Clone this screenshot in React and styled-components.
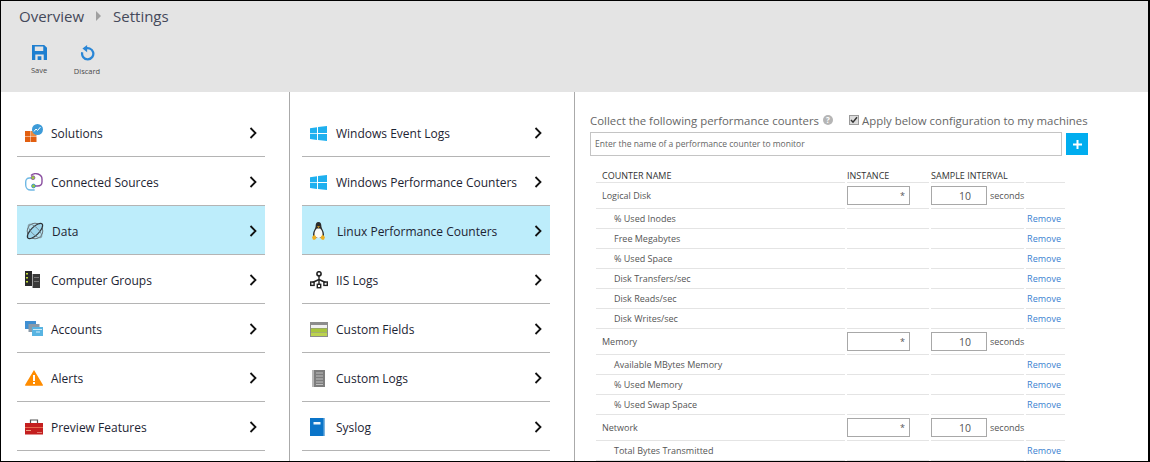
import React from "react";
import styled, { createGlobalStyle } from "styled-components";

const Global = createGlobalStyle`
  html, body { margin: 0; padding: 0; background: #fff; }
  * { box-sizing: border-box; }
`;

const Page = styled.div`
  width: 1150px;
  height: 462px;
  border: 1px solid #000;
  border-right-width: 2px;
  overflow: hidden;
  font-family: "Open Sans", "Noto Sans", sans-serif;
  color: #222;
  display: flex;
  flex-direction: column;
`;

const Header = styled.header`
  flex: none;
  height: 91px;
  background: #e4e4e4;
  padding: 5px 0 0 18px;
`;

const Crumbs = styled.nav`
  display: flex;
  align-items: center;
  height: 20px;
  font-size: 15px;
  color: #44495a;
`;

const CrumbArrow = styled.span`
  width: 0;
  height: 0;
  margin: 0 12px 0 12px;
  border-left: 5px solid #a0a0a0;
  border-top: 5px solid transparent;
  border-bottom: 5px solid transparent;
`;

const Toolbar = styled.div`
  display: flex;
  margin-top: 19px;
  margin-left: -2px;
`;

const ToolButton = styled.button`
  width: 44px;
  padding: 0;
  border: 0;
  background: none;
  display: flex;
  flex-direction: column;
  align-items: center;
  gap: 5px;
  font: 7.5px "Open Sans", sans-serif;
  color: #4a4a4a;
  & + & { margin-left: 4px; }
`;

const Columns = styled.main`
  flex: 1;
  display: flex;
  min-height: 0;
`;

const NavColumn = styled.section`
  flex: none;
  width: ${({ $width }) => $width}px;
  padding: 16px 0 0 ${({ $pad }) => $pad}px;
  border-right: 1px solid #aaa;
`;

const NavList = styled.ul`
  list-style: none;
  margin: 0;
  padding: 0;
  width: 248px;
`;

const NavItem = styled.li`
  height: 49px;
  display: flex;
  align-items: center;
  padding: 2px 8px 0 ${({ $active }) => ($active ? 9 : 8)}px;
  border-bottom: 1px solid #b4b4b4;
  background: ${({ $active }) => ($active ? "#bdedfb" : "transparent")};
  font-size: 12px;
  color: #1d2433;
`;

const IconSlot = styled.span`
  flex: none;
  width: 26px;
  height: 20px;
  display: flex;
  align-items: center;
`;

const Chevron = styled.svg`
  margin-left: auto;
`;

const Panel = styled.section`
  flex: 1;
  min-width: 0;
  padding: 19px 0 0 15px;
`;

const TopLine = styled.div`
  display: flex;
  align-items: center;
  height: 18px;
  font-size: 11.4px;
  color: #666;
`;

const HelpDot = styled.span`
  width: 10px;
  height: 10px;
  margin-left: 4px;
  border-radius: 50%;
  background: #b5b5b5;
  color: #fff;
  font-size: 8px;
  font-weight: 700;
  line-height: 10px;
  text-align: center;
`;

const CheckLabel = styled.label`
  display: flex;
  align-items: center;
  margin-left: 16px;
`;

const CheckBox = styled.span`
  width: 10px;
  height: 10px;
  margin-right: 3px;
  border: 1px solid #9a9a9a;
  background: #dcdcdc;
  display: flex;
  align-items: center;
  justify-content: center;
`;

const SearchRow = styled.div`
  display: flex;
  align-items: flex-start;
  margin-top: 3px;
`;

const SearchInput = styled.input`
  width: 472px;
  height: 24px;
  padding: 0 4px 2px;
  border: 1px solid #c4c4c4;
  font: 8.5px "Open Sans", sans-serif;
  color: #555;
  &::placeholder { color: #666; opacity: 1; }
`;

const AddButton = styled.button`
  width: 22px;
  height: 22px;
  margin: 1px 0 0 4px;
  padding: 0;
  border: 0;
  background: #00adef;
  display: flex;
  align-items: center;
  justify-content: center;
`;

const Table = styled.table`
  width: 473px;
  margin: 11px 0 0 4px;
  table-layout: fixed;
  border-collapse: separate;
  border-spacing: 2px 0;
  font-size: 9px;
  color: #555;
`;

const Th = styled.th`
  height: 16px;
  padding: 2px 0 0 ${({ $pad }) => $pad || 0}px;
  border-bottom: 1px solid #e4e4e4;
  font-weight: 400;
  text-align: left;
  color: #333;
  white-space: nowrap;
`;

const Td = styled.td`
  height: ${({ $group }) => ($group ? 26 : 20)}px;
  padding: 0 0 0 ${({ $pad }) => $pad || 0}px;
  border-bottom: 1px solid #e4e4e4;
  white-space: nowrap;
`;

const RemoveCell = styled(Td)`
  padding: 0 4px 0 0;
  text-align: right;
`;

const RemoveLink = styled.a`
  color: #3a7fd0;
`;

const ValueRow = styled.div`
  display: flex;
  align-items: center;
`;

const ValueBox = styled.input`
  width: ${({ $w }) => $w}px;
  height: 19px;
  padding: 0 ${({ $padRight }) => $padRight}px 0 0;
  border: 1px solid #a8a8a8;
  background: #fff;
  font: ${({ $size }) => $size}px "Open Sans", sans-serif;
  color: #555;
  text-align: right;
`;

const Unit = styled.span`
  margin-left: 3px;
`;

const SaveIcon = () => (
  <svg width="15" height="15" viewBox="0 0 16 16">
    <path fill="#1e7fd0" fillRule="evenodd" d="M0 0h13l3 3v13H0zM3 1.500v5h9v-5zM3.500 10v6h9v-6z" />
    <rect x="6" y="12" width="4" height="4" fill="#1e7fd0" />
  </svg>
);

const DiscardIcon = () => (
  <svg width="15" height="16" viewBox="0 0 16 17">
    <path d="M5 4.200a6 6 0 1 1-2.600 3.600" fill="none" stroke="#2a86d6" strokeWidth="2.400" />
    <path d="M7.600 0v7.600L2.600 3.800z" fill="#2a86d6" />
  </svg>
);

const SolutionsIcon = () => (
  <svg width="18" height="18" viewBox="0 0 18 18">
    <rect x="0" y="7" width="5.500" height="5" fill="#e25f10" />
    <rect x="0" y="12.500" width="5.500" height="5.500" fill="#e25f10" />
    <rect x="6" y="12.500" width="5.500" height="5.500" fill="#e25f10" />
    <rect x="6" y="7" width="5.500" height="5" fill="#ef8a3a" />
    <circle cx="12.500" cy="5.500" r="5.500" fill="#3d9bd8" />
    <path d="M9 7.500l2-2.500 1.500 1.500L15.500 3" fill="none" stroke="#fff" strokeWidth="1" />
  </svg>
);

const SourcesIcon = () => (
  <svg width="18" height="18" viewBox="0 0 18 18" fill="none">
    <path d="M6 2.500C7.500 .8 11 .5 13 1c2.500.8 4 2.500 4 5v3c0 2.500-2 4-4.500 4H10" stroke="#8a4fa0" strokeWidth="1.400" />
    <path d="M9 5H4.500C2 5 .7 6.800.7 9v3c0 3 2.300 5 5 5h4" stroke="#6fb8e4" strokeWidth="1.400" />
    <circle cx="8" cy="4.700" r="1.900" fill="#9ccc3c" stroke="#8a4fa0" strokeWidth="0.800" />
    <circle cx="8.500" cy="13" r="1.900" fill="#9ccc3c" stroke="#2a86d6" strokeWidth="0.800" />
  </svg>
);

const DataIcon = () => (
  <svg width="18" height="18" viewBox="0 0 18 18" fill="none">
    <circle cx="9" cy="9" r="7.800" fill="#b4e2f2" stroke="#6c777c" strokeWidth="1" />
    <ellipse cx="9" cy="9" rx="10" ry="4" transform="rotate(-45 9 9)" fill="#9ed6ec" stroke="#2f3438" strokeWidth="1.200" />
    <ellipse cx="9" cy="9" rx="9" ry="3.500" transform="rotate(45 9 9)" stroke="#6f7f86" strokeWidth="0.800" />
  </svg>
);

const GroupsIcon = () => (
  <svg width="15" height="18" viewBox="0 0 15 18">
    <rect x="0" y="0" width="7" height="15" fill="#2a2a2a" />
    <rect x="7" y="3" width="1" height="14" fill="#a8a8a8" />
    <rect x="8" y="3" width="7" height="14" fill="#3a3a3a" />
    <rect x="1" y="2" width="2" height="1.500" fill="#c4dc3c" />
    <rect x="1" y="6" width="2" height="1.500" fill="#c4dc3c" />
    <rect x="1" y="10" width="2" height="1.500" fill="#c4dc3c" />
    <rect x="9" y="6" width="5" height="1" fill="#777" />
    <rect x="9" y="10" width="5" height="1" fill="#777" />
  </svg>
);

const AccountsIcon = () => (
  <svg width="18" height="16" viewBox="0 0 18 16">
    <rect x="0" y="0" width="11" height="8" fill="#3f8fd2" />
    <rect x="3.500" y="3" width="11" height="8" fill="#8a9aa8" />
    <rect x="7" y="6" width="11" height="9" fill="#58b4e2" />
    <rect x="8" y="8" width="9" height="1" fill="#cdeaf7" />
    <rect x="11" y="10.500" width="4" height="1" fill="#cdeaf7" />
  </svg>
);

const AlertIcon = () => (
  <svg width="18" height="16" viewBox="0 0 18 16">
    <path d="M9 0l9 15a.6.6 0 0 1-.5.7H.5a.6.6 0 0 1-.5-.7z" fill="#ff8c00" />
    <rect x="8" y="5" width="2" height="6" fill="#fff" />
    <rect x="8" y="12" width="2" height="2" fill="#fff" />
  </svg>
);

const PreviewIcon = () => (
  <svg width="18" height="16" viewBox="0 0 18 16">
    <path d="M5.500 4V1h7v3" fill="none" stroke="#555" strokeWidth="1.200" />
    <rect x="0" y="4" width="18" height="11.500" fill="#c41f1f" />
    <rect x="0" y="8" width="18" height="1" fill="#e86a50" />
    <rect x="1" y="11" width="5" height="1" fill="#eda080" />
    <rect x="12" y="13" width="5" height="1" fill="#e07a70" />
  </svg>
);

const WindowsIcon = () => (
  <svg width="17" height="15" viewBox="0 0 17 15">
    <path fill="#1fb0ef" d="M0 2.200l7-1v6H0zM8 1l9-1v7H8zM0 8h7v6L0 13zM8 8h9v7l-9-1z" />
  </svg>
);

const PenguinIcon = () => (
  <svg width="15" height="18" viewBox="0 0 15 18">
    <path d="M7.500 0C5.300 0 4.600 2 4.600 4.500 4.600 6.500 2 9 2 12.500 2 14 3 15.500 4 16h7c1-.5 2-2 2-3.500C13 9 10.400 6.500 10.400 4.500 10.400 2 9.700 0 7.500 0z" fill="#2b2b2b" />
    <path d="M5.800 6.500C4 8.500 3.200 10.500 3.500 13c.3 1.500 1.500 3 4 3s3.700-1.500 4-3c.3-2.500-.5-4.500-2.300-6.500z" fill="#fbfbf6" />
    <path d="M6 4.300h3L7.500 6z" fill="#e9a820" />
    <path d="M1 15l2.700-2.500L5.500 16 4 17.800H2zM14 15l-2.700-2.500L9.500 16l1.500 1.800h2z" fill="#eeb020" />
  </svg>
);

const NetworkIcon = () => (
  <svg width="18" height="18" viewBox="0 0 18 18" fill="none">
    <circle cx="9" cy="2.800" r="2.100" stroke="#222" strokeWidth="1.600" />
    <path d="M9 5v8M9 8.500L2.500 11.500M9 8.500l6.500 3" stroke="#222" strokeWidth="1.400" />
    <rect x="0.700" y="11" width="3.400" height="3.400" stroke="#222" strokeWidth="1.400" />
    <rect x="7.300" y="13.300" width="3.400" height="3.400" stroke="#222" strokeWidth="1.400" />
    <rect x="13.900" y="11" width="3.400" height="3.400" stroke="#222" strokeWidth="1.400" />
  </svg>
);

const FieldsIcon = () => (
  <svg width="18" height="15" viewBox="0 0 18 15">
    <rect width="18" height="15" fill="#8c8c8c" />
    <rect x="1" y="3" width="16" height="3" fill="#f0f0f0" />
    <rect x="1" y="6.500" width="16" height="3.500" fill="#a8c63c" />
    <rect x="1" y="10.500" width="16" height="3.500" fill="#bcd34f" />
  </svg>
);

const LogsIcon = () => (
  <svg width="18" height="17" viewBox="0 0 18 17">
    <rect x="2" y="0" width="13" height="17" fill="#7d7d7d" />
    <rect x="2" y="0" width="2" height="17" fill="#b8b8b8" />
    <path d="M6 3h7M6 6h7M6 9h7M6 12h7M6 14.500h7" stroke="#d0d0d0" strokeWidth="0.800" />
  </svg>
);

const SyslogIcon = () => (
  <svg width="15" height="18" viewBox="0 0 15 18">
    <rect width="15" height="18" fill="#0a74c8" />
    <rect x="13.500" width="1.500" height="18" fill="#7fb5e0" />
    <rect x="3.500" y="4" width="7" height="2.500" fill="#eaf4fb" />
  </svg>
);

const ChevronIcon = () => (
  <Chevron width="8" height="12" viewBox="0 0 8 12">
    <path d="M1.500 1l5 5-5 5" fill="none" stroke="#111" strokeWidth="1.800" />
  </Chevron>
);

const primaryNav = [
  { label: "Solutions", icon: <SolutionsIcon /> },
  { label: "Connected Sources", icon: <SourcesIcon /> },
  { label: "Data", icon: <DataIcon />, active: true },
  { label: "Computer Groups", icon: <GroupsIcon /> },
  { label: "Accounts", icon: <AccountsIcon /> },
  { label: "Alerts", icon: <AlertIcon /> },
  { label: "Preview Features", icon: <PreviewIcon /> },
];

const dataNav = [
  { label: "Windows Event Logs", icon: <WindowsIcon /> },
  { label: "Windows Performance Counters", icon: <WindowsIcon /> },
  { label: "Linux Performance Counters", icon: <PenguinIcon />, active: true },
  { label: "IIS Logs", icon: <NetworkIcon /> },
  { label: "Custom Fields", icon: <FieldsIcon /> },
  { label: "Custom Logs", icon: <LogsIcon /> },
  { label: "Syslog", icon: <SyslogIcon /> },
];

const counterGroups = [
  {
    name: "Logical Disk",
    counters: ["% Used Inodes", "Free Megabytes", "% Used Space", "Disk Transfers/sec", "Disk Reads/sec", "Disk Writes/sec"],
  },
  { name: "Memory", counters: ["Available MBytes Memory", "% Used Memory", "% Used Swap Space"] },
  { name: "Network", counters: ["Total Bytes Transmitted"] },
];

const Nav = ({ items, width, pad }) => (
  <NavColumn $width={width} $pad={pad}>
    <NavList>
      {items.map((item) => (
        <NavItem key={item.label} $active={item.active}>
          <IconSlot>{item.icon}</IconSlot>
          {item.label}
          <ChevronIcon />
        </NavItem>
      ))}
    </NavList>
  </NavColumn>
);

export default function App() {
  return (
    <Page>
      <Global />
      <Header>
        <Crumbs>
          Overview
          <CrumbArrow />
          Settings
        </Crumbs>
        <Toolbar>
          <ToolButton>
            <SaveIcon />
            Save
          </ToolButton>
          <ToolButton>
            <DiscardIcon />
            Discard
          </ToolButton>
        </Toolbar>
      </Header>
      <Columns>
        <Nav items={primaryNav} width={289} pad={16} />
        <Nav items={dataNav} width={285} pad={12} />
        <Panel>
          <TopLine>
            Collect the following performance counters
            <HelpDot>?</HelpDot>
            <CheckLabel>
              <CheckBox>
                <svg width="8" height="8" viewBox="0 0 8 8">
                  <path d="M1 4l2 2.200L7 1.200" fill="none" stroke="#333" strokeWidth="1.500" />
                </svg>
              </CheckBox>
              Apply below configuration to my machines
            </CheckLabel>
          </TopLine>
          <SearchRow>
            <SearchInput placeholder="Enter the name of a performance counter to monitor" />
            <AddButton aria-label="Add">
              <svg width="9" height="9" viewBox="0 0 9 9">
                <path d="M4.500 0v9M0 4.500h9" stroke="#fff" strokeWidth="2" />
              </svg>
            </AddButton>
          </SearchRow>
          <Table>
            <colgroup>
              <col style={{ width: 249 }} />
              <col style={{ width: 82 }} />
              <col style={{ width: 93 }} />
              <col />
            </colgroup>
            <thead>
              <tr>
                <Th $pad={6}>COUNTER NAME</Th>
                <Th>INSTANCE</Th>
                <Th>SAMPLE INTERVAL</Th>
                <Th />
              </tr>
            </thead>
            <tbody>
              {counterGroups.map((group) => (
                <React.Fragment key={group.name}>
                  <tr>
                    <Td $group $pad={6}>{group.name}</Td>
                    <Td $group>
                      <ValueBox $w={63} $size={9} $padRight={4} defaultValue="*" />
                    </Td>
                    <Td $group>
                      <ValueRow>
                        <ValueBox $w={56} $size={10.500} $padRight={15} defaultValue="10" />
                        <Unit>seconds</Unit>
                      </ValueRow>
                    </Td>
                    <Td $group />
                  </tr>
                  {group.counters.map((counter) => (
                    <tr key={counter}>
                      <Td $pad={18}>{counter}</Td>
                      <Td />
                      <Td />
                      <RemoveCell>
                        <RemoveLink>Remove</RemoveLink>
                      </RemoveCell>
                    </tr>
                  ))}
                </React.Fragment>
              ))}
            </tbody>
          </Table>
        </Panel>
      </Columns>
    </Page>
  );
}
